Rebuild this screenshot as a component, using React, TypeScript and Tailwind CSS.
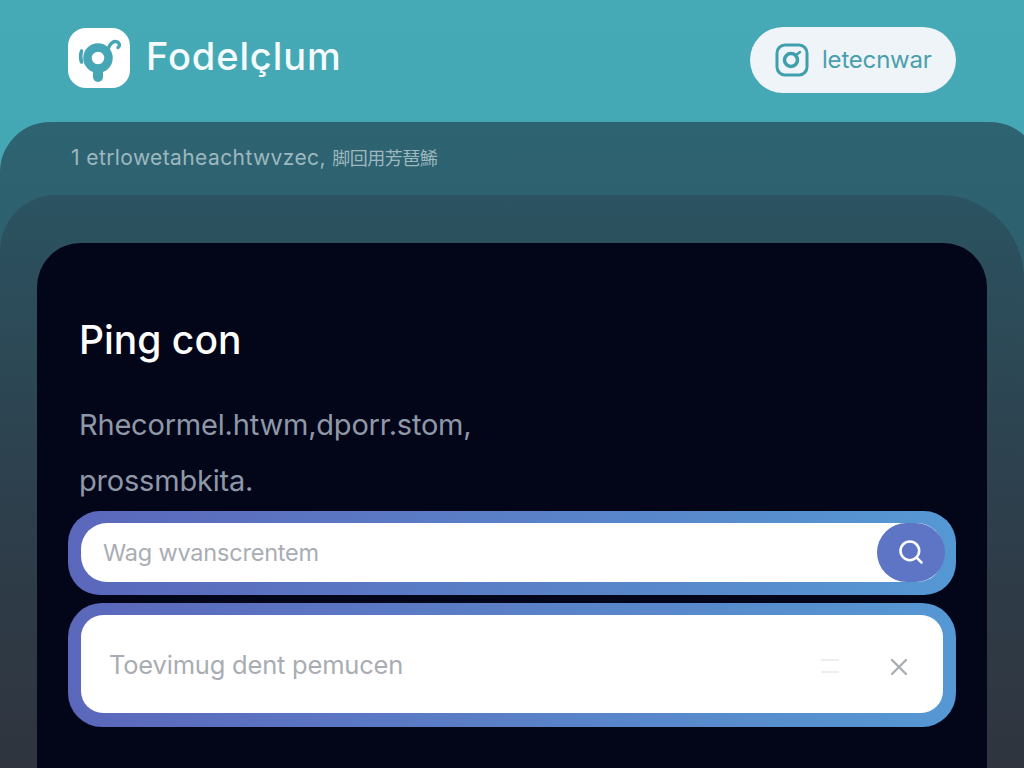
import { Search, X } from 'lucide-react'

function LogoMark() {
  return (
    <svg width="62" height="60" viewBox="0 0 62 60" fill="none">
      <circle cx="30" cy="30" r="10.500" stroke="#46a6b5" strokeWidth="8.500" />
      <path d="M13.500 23c-1 3-1 8 0 11" stroke="#46a6b5" strokeWidth="3.500" strokeLinecap="round" />
      <path d="M40 21c2-6 6-8.500 9.500-7 2.500 1.200 2.500 4.500 .5 5.500" stroke="#46a6b5" strokeWidth="3.500" strokeLinecap="round" />
      <path d="M30 42v7" stroke="#46a6b5" strokeWidth="10" strokeLinecap="round" />
    </svg>
  )
}

function InstaMark() {
  return (
    <svg width="34" height="34" viewBox="0 0 34 34" fill="none">
      <rect x="2" y="2" width="30" height="30" rx="8" stroke="#3f9fae" strokeWidth="3" />
      <circle cx="16" cy="17" r="6.500" stroke="#3f9fae" strokeWidth="3.500" />
      <path d="M21 12l4-3" stroke="#3f9fae" strokeWidth="2.500" strokeLinecap="round" />
    </svg>
  )
}

export default function App() {
  return (
    <div className="h-[768px] w-[1024px] overflow-hidden bg-gradient-to-b from-[#46a9b6] to-[#40a1ae] font-['Inter',sans-serif]">
      <header className="flex h-[122px] items-start justify-between pl-[68px] pr-[68px] pt-[27px]">
        <div className="flex items-center gap-4 pt-px">
          <div className="flex h-[60px] w-[62px] items-center justify-center rounded-[18px] bg-white">
            <LogoMark />
          </div>
          <span className="-mt-1 text-[38px] font-medium leading-none tracking-[0.9px] text-[#f3fbfc]">Fodelçlum</span>
        </div>
        <button className="flex h-[66px] w-[206px] items-center gap-[13px] rounded-full bg-[#eef4f7] pl-[25px]">
          <InstaMark />
          <span className="text-2xl leading-none tracking-[-0.2px] text-[#4a9fad]">letecnwar</span>
        </button>
      </header>

      <div className="mr-[-16px] h-[646px] rounded-t-[50px] bg-gradient-to-b from-[#2e6371] to-[#2b5766] pt-[26px]">
        <p className="h-5 pl-[71px] text-[21px] leading-5 tracking-[0.4px] text-[#9db8bf]">
          1 etrlowetaheachtwvzec,{' '}
          <span className="font-['Noto_Sans_CJK_SC',sans-serif] text-lg leading-none tracking-[-0.5px]">脚回用芳琶鯑</span>
        </p>
        <div className="mr-4 mt-[27px] h-[573px] rounded-tl-[56px] rounded-tr-[84px] bg-gradient-to-b from-[#2b5361] via-[#2d404d] to-[#2f343e] px-[37px] pt-[48px]">
          <main className="h-[525px] rounded-t-[44px] bg-[#030619] px-[31px] pt-[72px]">
            <h1 className="pl-[11px] text-[39px] font-medium leading-[50px] text-white">Ping con</h1>
            <p className="mt-8 pl-[11px] text-[29px] leading-[56px] tracking-[-0.2px] text-[#8f98a8]">
              Rhecormel.htwm,dporr.stom,
              <br />
              prossmbkita.
            </p>

            <div className="mt-[2px] flex h-[84px] w-[888px] items-center rounded-[32px] bg-gradient-to-r from-[#5b67bb] to-[#5598d3] px-[13px] pb-0.5">
              <div className="flex h-[59px] flex-1 items-center justify-between rounded-[26px] bg-white pl-[22px]">
                <span className="mt-0.5 text-[23.500px] tracking-[-0.2px] text-[#a9adb3]">Wag wvanscrentem</span>
                <span className="-mr-0.5 flex h-[59px] w-[68px] items-center justify-center rounded-full bg-[#5d75c4]">
                  <Search size={28} strokeWidth={2.200} className="text-white" />
                </span>
              </div>
            </div>

            <div className="mt-2 flex h-[124px] w-[888px] items-center rounded-[34px] bg-gradient-to-r from-[#5b67bb] to-[#5598d3] px-[13px] pb-0.5">
              <div className="flex h-[98px] flex-1 items-center justify-between rounded-[22px] bg-white pl-7 pr-[30px]">
                <span className="mt-0.5 text-[25.500px] tracking-[-0.2px] text-[#a9adb3]">Toevimug dent pemucen</span>
                <div className="flex items-center gap-[46px]">
                  <div className="mt-1 flex flex-col gap-2.5">
                    <div className="h-0.5 w-[18px] bg-[#eceef0]" />
                    <div className="h-0.5 w-[18px] bg-[#eceef0]" />
                  </div>
                  <X size={28} strokeWidth={2} className="mt-[5px] text-[#a9adb0]" />
                </div>
              </div>
            </div>
          </main>
        </div>
      </div>
    </div>
  )
}
